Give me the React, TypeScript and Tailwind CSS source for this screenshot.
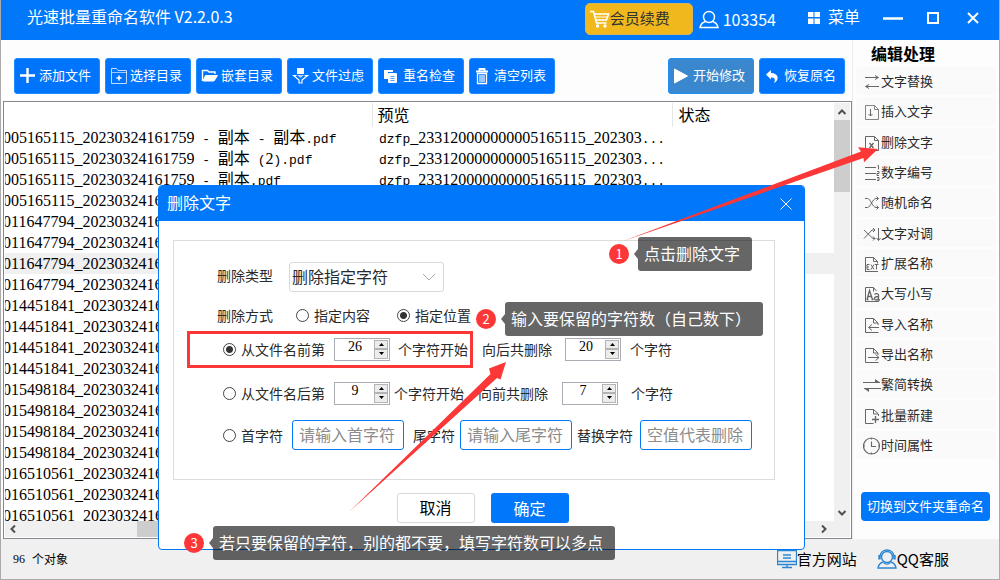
import { useState } from "react";
import type { ReactNode } from "react";
import clsx from "clsx";

const fileRows = [
  { name: "005165115_20230324161759 - 副本 - 副本.pdf", preview: "dzfp_233120000000005165115_202303..." },
  { name: "005165115_20230324161759 - 副本 (2).pdf", preview: "dzfp_233120000000005165115_202303..." },
  { name: "005165115_20230324161759 - 副本.pdf", preview: "dzfp_233120000000005165115_202303..." },
  { name: "005165115_20230324161" },
  { name: "011647794_20230324161" },
  { name: "011647794_20230324161" },
  { name: "011647794_20230324161", active: true },
  { name: "011647794_20230324161" },
  { name: "014451841_20230324161" },
  { name: "014451841_20230324161" },
  { name: "014451841_20230324161" },
  { name: "014451841_20230324161" },
  { name: "015498184_20230324161" },
  { name: "015498184_20230324161" },
  { name: "015498184_20230324161" },
  { name: "015498184_20230324161" },
  { name: "016510561_20230324161" },
  { name: "016510561_20230324161" },
  { name: "016510561_20230324161" },
];

function GridText({ text }: { text: string }) {
  const parts = text.split(/([0-9_]+|[\u4e00-\u9fff]+)/).filter(Boolean);
  return (
    <>
      {parts.map((part, i) => (
        <span
          key={i}
          className={clsx(
            /^[0-9_]/.test(part) && "font-['Liberation_Serif',serif] text-base/4",
            /^[\u4e00-\u9fff]/.test(part) && "text-base/4",
            /^[^0-9_\u4e00-\u9fff]/.test(part) && "font-['Liberation_Mono',monospace] text-[13px]/4"
          )}
        >
          {part}
        </span>
      ))}
    </>
  );
}

function Icon({ children, className = "size-[18px]", box = 18 }: { children: ReactNode; className?: string; box?: number }) {
  return (
    <svg
      className={clsx("shrink-0", className)}
      viewBox={`0 0 ${box} ${box}`}
      fill="none"
      stroke="currentColor"
      strokeWidth="1"
      aria-hidden="true"
    >
      {children}
    </svg>
  );
}

const tools = [
  {
    label: "添加文件",
    icon: <path d="M8.5 1v15M1 8.5h15" strokeWidth="2.4" />,
  },
  {
    label: "选择目录",
    icon: (
      <>
        <path d="M1.5 16.5v-15h5l1.5 2h8.5v13z" opacity=".75" />
        <path d="M1.5 5.5h15" opacity=".6" />
        <path d="M9 8.5v5M6.500 11h5" strokeWidth="1.6" />
      </>
    ),
  },
  {
    label: "嵌套目录",
    icon: (
      <>
        <path d="M1.500 14V3.500h5l1.500 1.500h6v2" strokeWidth="1.4" />
        <path d="M4.500 8.500h12l-3.500 5.500H2z" fill="currentColor" />
      </>
    ),
  },
  {
    label: "文件过虑",
    icon: (
      <>
        <path d="M5 1h7v6H5z" fill="currentColor" stroke="none" />
        <path d="M4.500 8.500H1.500L7 13v3h3v-3l5.500-4.500h-3" strokeWidth="1.2" />
        <path d="M5 8h7l-3.500 3z" fill="currentColor" stroke="none" opacity=".7" />
      </>
    ),
  },
  {
    label: "重名检查",
    icon: (
      <>
        <path d="M1 3h9v2H5v7H1z" fill="currentColor" stroke="none" />
        <rect x="5" y="6" width="9" height="10" rx="1" fill="currentColor" stroke="none" />
        <path d="M7.500 9.500h4M7.500 11.500h4M7.500 13.500h4" stroke="#0078ff" strokeOpacity=".7" />
      </>
    ),
  },
  {
    label: "清空列表",
    icon: (
      <>
        <path d="M2 4.500h12M5.500 4V2h5v2" strokeWidth="1.8" />
        <path d="M3.500 6.500v10h9v-10z" strokeWidth="1.3" />
        <path d="M6 8v7M8 8v7M10 8v7" strokeWidth="1.2" />
      </>
    ),
  },
];

const page = <path d="M10.500 16.500H2.500v-14h8l5 4.500v2M10.500 2.500v4.500h4.500" />;
const shortPage = <path d="M2.500 16.500v-14h8l4.500 4.500v2M10.500 2.500v4.500h4.500M2.500 16.500h13" />;

const sideItems = [
  {
    label: "文字替换",
    icon: <path d="M2 4.500h13M12 2.500l3.500 2L12 6.500M16 13.500H2.500M6 11.500l-3.500 2L6 15.500" />,
  },
  {
    label: "插入文字",
    icon: (
      <>
        <path d="M2.500 2.500h9l4 4v10h-13zM11.500 2.500v4h4" opacity=".8" />
        <path d="M7.500 6v7M5.500 11l2 2 2-2" />
      </>
    ),
  },
  {
    label: "删除文字",
    icon: (
      <>
        <path d="M2.500 2.500h9l4 4v10h-13zM11.500 2.500v4h4" />
        <path d="M6.500 9l4 5M10.500 9l-4 5" strokeWidth="1.300" />
      </>
    ),
  },
  {
    label: "数字编号",
    icon: (
      <>
        <path d="M2 3.500h11M2 9.500h11M2 15.500h11" />
        <path d="M14.500 1.500h1v4M14 7.500h2v2h-2v2h2M14 13.500h2v3h-2M14.500 15h1" />
      </>
    ),
  },
  {
    label: "随机命名",
    icon: <path d="M2 4.500h2.500c3 0 5 9 8.500 9h2.500M2 13.500h2.500c3 0 5-9 8.500-9h2.500M13.500 2.500l2 2-2 2M13.500 11.500l2 2-2 2" />,
  },
  {
    label: "文字对调",
    icon: <path d="M1 5l9 8.500h2M1 13.500L9 5h3M10 3l2 2-2 2M10 11.500l2 2-2 2M15.500 3v12.500M13.500 13l2 2.500 2-2.500" />,
  },
  {
    label: "扩展名称",
    icon: (
      <>
        <path d="M2.500 16.500v-14h8l4 4v2M10.500 2.500v4h4M2 16.500h13" />
        <path d="M6.500 9.500H4v5h2.500M4 12h2M8 9.500l3 5M11 9.500l-3 5M12 9.500h3.500M13.500 9.500v5" />
      </>
    ),
  },
  {
    label: "大写小写",
    icon: (
      <>
        <path d="M2.500 16.500v-14h8l3 3.500M10.500 2.500v4M2 16.500h14" />
        <path d="M4 14.500L6.500 5.500 9.500 14.500M5 11.500h4M3.500 14.500h2M8.500 14.500h2" strokeWidth="1.300" />
        <path d="M11.500 9.500c1-1.500 4-1 4 .5v5h1.500M15.500 11.500c-5 0-5 3.500-2.500 3.500 1.500 0 2.500-1 2.500-2" strokeWidth="1.300" />
      </>
    ),
  },
  {
    label: "导入名称",
    icon: (
      <>
        {shortPage}
        <path d="M16 11.500H6M9 8.500l-3.500 3L9 14.500" />
      </>
    ),
  },
  {
    label: "导出名称",
    icon: (
      <>
        {shortPage}
        <path d="M5 11.500h11M12.500 8.500l3.500 3-3.500 3" />
      </>
    ),
  },
  {
    label: "繁简转换",
    icon: (
      <>
        <path d="M0 6.500h17M1 12.500h17" />
        <path d="M12 3l5 3.500h-5zM6 16l-5-3.500h5z" fill="currentColor" stroke="none" />
      </>
    ),
  },
  {
    label: "批量新建",
    icon: (
      <>
        {page}
        <path d="M12.500 9v7M9 12.500h7" strokeWidth="1.300" />
      </>
    ),
  },
  {
    label: "时间属性",
    icon: (
      <>
        <circle cx="8.500" cy="9" r="8" strokeWidth="1.200" />
        <path d="M8.500 4.500V9.500H13M8.500 1v1.500M8.500 15.500V17M.5 9H2M15 9h1.500" strokeWidth="1.100" />
      </>
    ),
  },
];

function TitleBar() {
  return (
    <header className="flex h-10 shrink-0 items-start bg-[#0078f9] pl-[26px] pr-5 text-white">
      <h1 className="mt-1 flex-1 text-base/6">光速批量重命名软件 V2.2.0.3</h1>
      <button className="mt-[3px] flex h-8 w-[108px] items-center rounded-[5px] border border-[#d9b45a] bg-[#f0b81c] pl-1 text-[15px] text-[#333]">
        <Icon className="size-5 text-white" box={20}>
          <path d="M0 2.500h3.500l3 11.500h10" strokeWidth="1.600" />
          <path d="M4 5h14.500l-2 6H6" strokeWidth="1.600" />
          <path d="M5 8h12" />
          <circle cx="7.500" cy="17" r="1" strokeWidth="1.400" />
          <circle cx="15" cy="17" r="1" strokeWidth="1.400" />
        </Icon>
        <span className="-mt-0.5">会员续费</span>
      </button>
      <div className="ml-1.5 mt-[7px] flex items-center gap-1 text-base/6">
        <Icon className="size-5" box={20}>
          <circle cx="10" cy="8" r="5.500" strokeWidth="1.400" />
          <path d="M6.500 12.500C3 13.500 1.500 16 1 18.500h18c-.5-2.500-2-5-5.500-6" strokeWidth="1.400" />
        </Icon>
        <span>103354</span>
      </div>
      <button className="ml-8 mt-1 flex items-center gap-2 text-base/6">
        <svg className="mt-1 size-3" viewBox="0 0 12 12" fill="currentColor" aria-hidden="true">
          <path d="M0 0h5.500v5H0zM6.500 0H12v5H6.500zM0 6.500h5.500V12H0zM6.500 6.500H12V12H6.500z" />
        </svg>
        菜单
      </button>
      <button aria-label="最小化" className="ml-[23px] mt-2">
        <Icon className="size-5" box={20}>
          <path d="M0 10.500h20" strokeWidth="2.500" />
        </Icon>
      </button>
      <button aria-label="最大化" className="ml-6 mt-3">
        <Icon className="size-3" box={12}>
          <path d="M1 1h10v10H1z" strokeWidth="2" />
        </Icon>
      </button>
      <button aria-label="关闭" className="ml-7 mt-3">
        <Icon className="size-3" box={12}>
          <path d="M1 1l10 10M11 1L1 11" strokeWidth="2" />
        </Icon>
      </button>
    </header>
  );
}

function Toolbar() {
  return (
    <div className="flex h-[61px] shrink-0 items-start justify-between pl-[11px] pr-[7px] pt-[18px] text-[13px] text-white">
      <div className="flex gap-[5px]">
        {tools.map((tool) => (
          <button
            key={tool.label}
            className="flex h-9 w-[86px] items-center gap-0.5 rounded-[3px] border border-[#1d8cff] bg-[#0074fc] pl-1"
          >
            <Icon>{tool.icon}</Icon>
            <span className="-mt-0.5">{tool.label}</span>
          </button>
        ))}
      </div>
      <div className="flex gap-[5px]">
        <button className="flex h-9 w-[86px] items-center gap-0.5 rounded-[3px] border border-[#2090f8] bg-[#3a87cd] pl-1">
          <Icon>
            <path d="M1.500 2v14l13-7z" fill="currentColor" strokeLinejoin="round" />
          </Icon>
          <span className="-mt-0.5">开始修改</span>
        </button>
        <button className="flex h-9 w-[86px] items-center gap-0.5 rounded-[3px] border border-[#1d8cff] bg-[#0074fc] pl-1">
          <Icon>
            <path d="M2 7.500l5-4.500v3c7.500 0 9 7 3 10 2-4 .5-5.500-3-5.500V12.500z" fill="currentColor" stroke="none" />
          </Icon>
          <span className="-mt-0.5">恢复原名</span>
        </button>
      </div>
    </div>
  );
}

function FileList() {
  return (
    <div className="flex min-h-0 flex-1 flex-col border border-[#828790] bg-white p-px">
      <div className="flex min-h-0 flex-1">
        <div className="min-w-0 flex-1 overflow-hidden">
          <table className="w-full table-fixed border-collapse whitespace-pre text-left text-black">
            <colgroup>
              <col className="w-[367px]" />
              <col className="w-[300px]" />
              <col />
            </colgroup>
            <thead>
              <tr className="h-6 align-top text-base/[22px]">
                <th className="p-0" aria-label="名称" />
                <th className="border-l border-[#e5e5e5] p-0 pl-[5px] font-normal">预览</th>
                <th className="border-l border-[#e5e5e5] p-0 pl-1.5 font-normal">状态</th>
              </tr>
            </thead>
            <tbody>
              {fileRows.map((row, i) => (
                <tr key={i} className={clsx("h-[21px] text-base/4", row.active && "bg-[#f0f0f0]")}>
                  <td className="overflow-hidden p-0">
                    <div className="-ml-0.5 h-5">
                      <GridText text={row.name} />
                    </div>
                  </td>
                  <td className="overflow-hidden p-0 pl-[7px]">
                    {row.preview && (
                      <div className="h-5">
                        <GridText text={row.preview} />
                      </div>
                    )}
                  </td>
                  <td />
                </tr>
              ))}
            </tbody>
          </table>
        </div>
        <div className="flex w-4 shrink-0 flex-col items-center bg-[#f0f0f0] text-[#505050]">
          <Icon className="size-4" box={16}>
            <path d="M4.500 11L8 7.500l3.500 3.500" strokeWidth="2" />
          </Icon>
          <div className="mt-px h-[72px] w-full bg-[#cdcdcd]" />
          <Icon className="mt-auto size-4" box={16}>
            <path d="M4.500 6L8 9.500 11.500 6" strokeWidth="2" />
          </Icon>
        </div>
      </div>
      <div className="flex h-4 shrink-0 items-center bg-[#f0f0f0] pr-[18px] text-[#505050]">
        <Icon className="size-4" box={16}>
          <path d="M10 4.500L6.500 8l3.500 3.500" strokeWidth="2" />
        </Icon>
        <div className="ml-[116px] h-4 w-[320px] bg-[#cdcdcd]" />
        <Icon className="ml-auto size-4" box={16}>
          <path d="M6 4.500L9.500 8 6 11.500" strokeWidth="2" />
        </Icon>
      </div>
    </div>
  );
}

function Sidebar() {
  return (
    <aside className="flex w-[147px] shrink-0 flex-col border-l border-[#ececec] bg-[#fdfdfd]">
      <h2 className="h-[27px] pl-[18px] pt-px text-base/6 font-bold text-black">编辑处理</h2>
      <nav className="flex h-[392px] flex-col gap-0.5 px-[3px]">
        {sideItems.map((item) => (
          <button key={item.label} className="flex flex-1 items-center rounded bg-[#fafafa] pl-[7px] text-[13px] text-[#2a2a2a]">
            <Icon className="mt-0.5 size-[18px] text-[#666]">{item.icon}</Icon>
            <span className="leading-5">{item.label}</span>
          </button>
        ))}
      </nav>
      <button className="ml-2 mr-[9px] mt-[33px] h-[29px] rounded bg-[#0078f9] pb-0.5 text-[13px] text-white">切换到文件夹重命名</button>
    </aside>
  );
}

function StatusBar() {
  return (
    <footer className="flex h-10 shrink-0 items-center bg-[#f0f0f0] pl-3 pr-[50px] text-black">
      <span className="flex flex-1 items-center gap-[7px] text-xs">
        <span className="font-['Liberation_Serif',serif]">96</span>
        <span>个对象</span>
      </span>
      <a href="#site" className="flex items-center text-[15px]">
        <Icon className="size-5 text-[#2b86d1]" box={20}>
          <path d="M.5 1.500h19v14H.5zM.5 12.500h19M6 6h8M6 9h8M10 15.500v3M5 18.500h10" strokeWidth="1.300" />
        </Icon>
        官方网站
      </a>
      <a href="#qq" className="ml-5 flex items-center text-[15px]">
        <Icon className="size-5 text-[#2b86d1]" box={20}>
          <circle cx="10" cy="8" r="5.500" strokeWidth="1.400" />
          <path d="M3 10.500V7C4-1 16-1 17 7v3.500M2 6v4.500M18 6v4.500" strokeWidth="1.400" />
          <path d="M6 13c-3 1-4.500 3-5 6h18c-.5-3-2-5-5-6M6.500 13.500c2 2 5 2 7 0" strokeWidth="1.400" />
        </Icon>
        QQ客服
      </a>
    </footer>
  );
}

const radioClass =
  "size-[13px] shrink-0 appearance-none rounded-full border border-[#444] bg-white checked:bg-[radial-gradient(circle,#333_3px,transparent_4px)]";

interface RadioProps {
  name: string;
  label: string;
  checked: boolean;
  onChange: () => void;
}

function Radio({ name, label, checked, onChange }: RadioProps) {
  return (
    <label className="flex shrink-0 items-center gap-[5px]">
      <input type="radio" name={name} checked={checked} onChange={onChange} className={radioClass} />
      {label}
    </label>
  );
}

function Spinner({ label, initial }: { label: string; initial: number }) {
  const [value, setValue] = useState(initial);

  return (
    <div className="flex h-[23px] w-14 shrink-0 border border-[#a9acb2] bg-white p-px">
      <input
        type="number"
        aria-label={label}
        value={value}
        onChange={(e) => setValue(Number(e.target.value))}
        className="min-w-0 flex-1 pb-1 text-center font-['Liberation_Serif',serif] text-sm/4 text-black outline-none [appearance:textfield] [&::-webkit-inner-spin-button]:appearance-none"
      />
      <div className="flex w-[14px] flex-col">
        <button aria-label="增加" onClick={() => setValue(value + 1)} className="flex flex-1 items-center justify-center border border-[#b4b4b4] bg-[#ececec]">
          <svg className="h-[3px] w-[5px]" viewBox="0 0 5 3" aria-hidden="true">
            <path d="M0 3L2.500 0 5 3z" />
          </svg>
        </button>
        <button aria-label="减少" onClick={() => setValue(value - 1)} className="flex flex-1 items-center justify-center border border-[#b4b4b4] bg-[#ececec]">
          <svg className="h-[3px] w-[5px]" viewBox="0 0 5 3" aria-hidden="true">
            <path d="M0 0l2.500 3L5 0z" />
          </svg>
        </button>
      </div>
    </div>
  );
}

const textInputClass =
  "h-[30px] w-28 shrink-0 rounded-[3px] border border-[#0078f9] px-1.5 pb-0.5 text-base text-[#333] outline-none placeholder:text-[#8c8c8c]";

function DeleteDialog() {
  const [mode, setMode] = useState("position");
  const [rule, setRule] = useState("front");

  return (
    <section
      role="dialog"
      aria-label="删除文字"
      className="absolute left-[157px] top-[185px] flex h-[365px] w-[647px] flex-col overflow-hidden rounded border border-[#0078f9] bg-white text-sm text-[#2a2a2a]"
    >
      <div className="flex h-[35px] shrink-0 items-center justify-between bg-[#0078f9] pl-2 pr-3 text-base text-white">
        <h2 className="pb-1">删除文字</h2>
        <button aria-label="关闭">
          <Icon className="size-3" box={12}>
            <path d="M.5.5l11 11M11.500.5l-11 11" />
          </Icon>
        </button>
      </div>

      <div className="ml-[14px] mr-[29px] mt-[19px] h-[240px] border border-[#dcdcdc] pt-[21px]">
        <div className="flex items-center gap-4 pl-[43px]">
          <label htmlFor="delete-type" className="pb-1">删除类型</label>
          <div className="relative">
            <select id="delete-type" className="h-[30px] w-[155px] appearance-none rounded-[3px] border border-[#d9d9d9] bg-white pb-0.5 pl-0.5 text-base/6 outline-none">
              <option>删除指定字符</option>
            </select>
            <Icon className="pointer-events-none absolute right-2 top-2 size-[14px] text-[#aaa]" box={14}>
              <path d="M1 4l6 6 6-6" />
            </Icon>
          </div>
        </div>

        <div className="mt-[11px] flex h-6 items-center pl-[43px]">
          <span className="mr-[23px]">删除方式</span>
          <Radio name="mode" label="指定内容" checked={mode === "content"} onChange={() => setMode("content")} />
          <div className="w-[27px]" />
          <Radio name="mode" label="指定位置" checked={mode === "position"} onChange={() => setMode("position")} />
        </div>

        <div className="mt-[7px] flex h-[30px] items-center pl-[49px]">
          <Radio name="rule" label="从文件名前第" checked={rule === "front"} onChange={() => setRule("front")} />
          <div className="ml-[9px] flex items-center gap-2">
            <Spinner label="从文件名前第" initial={26} />
            <span>个字符开始</span>
          </div>
          <div className="ml-[14px] flex items-center">
            <span className="mr-[13px]">向后共删除</span>
            <Spinner label="向后共删除" initial={20} />
            <span className="ml-[9px]">个字符</span>
          </div>
        </div>

        <div className="mt-[14px] flex h-[30px] items-center pl-[49px]">
          <Radio name="rule" label="从文件名后第" checked={rule === "back"} onChange={() => setRule("back")} />
          <div className="ml-[9px] flex items-center gap-1">
            <Spinner label="从文件名后第" initial={9} />
            <span>个字符开始</span>
          </div>
          <div className="ml-[14px] flex items-center">
            <span className="mr-[14px]">向前共删除</span>
            <Spinner label="向前共删除" initial={7} />
            <span className="ml-[13px]">个字符</span>
          </div>
        </div>

        <div className="mt-3 flex h-[30px] items-center pl-[49px]">
          <Radio name="rule" label="首字符" checked={rule === "chars"} onChange={() => setRule("chars")} />
          <input aria-label="首字符" placeholder="请输入首字符" className={clsx(textInputClass, "ml-[9px]")} />
          <label htmlFor="tail-char" className="ml-[9px] mr-[5px] shrink-0">尾字符</label>
          <input id="tail-char" placeholder="请输入尾字符" className={textInputClass} />
          <label htmlFor="swap-char" className="ml-[5px] mr-[7px] shrink-0">替换字符</label>
          <input id="swap-char" placeholder="空值代表删除" className={textInputClass} />
        </div>
      </div>

      <div className="mt-[13px] flex justify-center gap-4 pl-0.5 text-base">
        <button className="h-[30px] w-[78px] rounded-[3px] border border-[#d9d9d9] bg-white pb-0.5 text-black">取消</button>
        <button className="h-[30px] w-[78px] rounded-[3px] bg-[#0078f9] text-white">确定</button>
      </div>
    </section>
  );
}

function Callout({ step, text, className }: { step: number; text: string; className: string }) {
  return (
    <div className={clsx("absolute flex items-center text-base/6 text-white", className)}>
      <span className="flex size-5 items-center justify-center rounded-full bg-[#fc3737] text-[13px]">{step}</span>
      <svg className="ml-[5px] h-2.5 w-1" viewBox="0 0 4 10" aria-hidden="true">
        <path d="M4 0v10L0 5z" fillOpacity=".6" />
      </svg>
      <span className="h-[34px] whitespace-nowrap rounded-[3px] bg-black/60 pl-1.5 pr-3 pt-1">{text}</span>
    </div>
  );
}

function Guide() {
  return (
    <div className="pointer-events-none absolute -left-px top-0">
      <div className="absolute left-[187px] top-[331px] h-[37px] w-[286px] border-3 border-[#fc3737]" />
      <svg className="absolute left-0 top-0 h-[580px] w-[1000px] max-w-none" viewBox="0 0 1000 580" fill="#fc3737" aria-hidden="true">
        <path d="M622 241.500L861 151.500 858 147.300 878 149 864 162.300 863.500 158z" />
        <path d="M349 512L490.500 374 489 368.500 506 362 500.500 379.500 497 378z" />
      </svg>
      <Callout step={1} text="点击删除文字" className="left-[609px] top-[237px]" />
      <Callout step={2} text="输入要保留的字符数（自己数下）" className="left-[476px] top-[302px]" />
      <Callout step={3} text="若只要保留的字符，别的都不要，填写字符数可以多点" className="left-[184px] top-[526px]" />
    </div>
  );
}

export default function App() {
  return (
    <div className="relative flex h-screen flex-col overflow-hidden border-x border-b border-[#aaa] bg-[#fdfdfd] font-['Noto_Sans_CJK_SC',sans-serif]">
      <TitleBar />
      <main className="flex min-h-0 flex-1">
        <div className="flex min-w-0 flex-1 flex-col pl-0.5">
          <Toolbar />
          <FileList />
        </div>
        <Sidebar />
      </main>
      <StatusBar />
      <DeleteDialog />
      <Guide />
    </div>
  );
}
